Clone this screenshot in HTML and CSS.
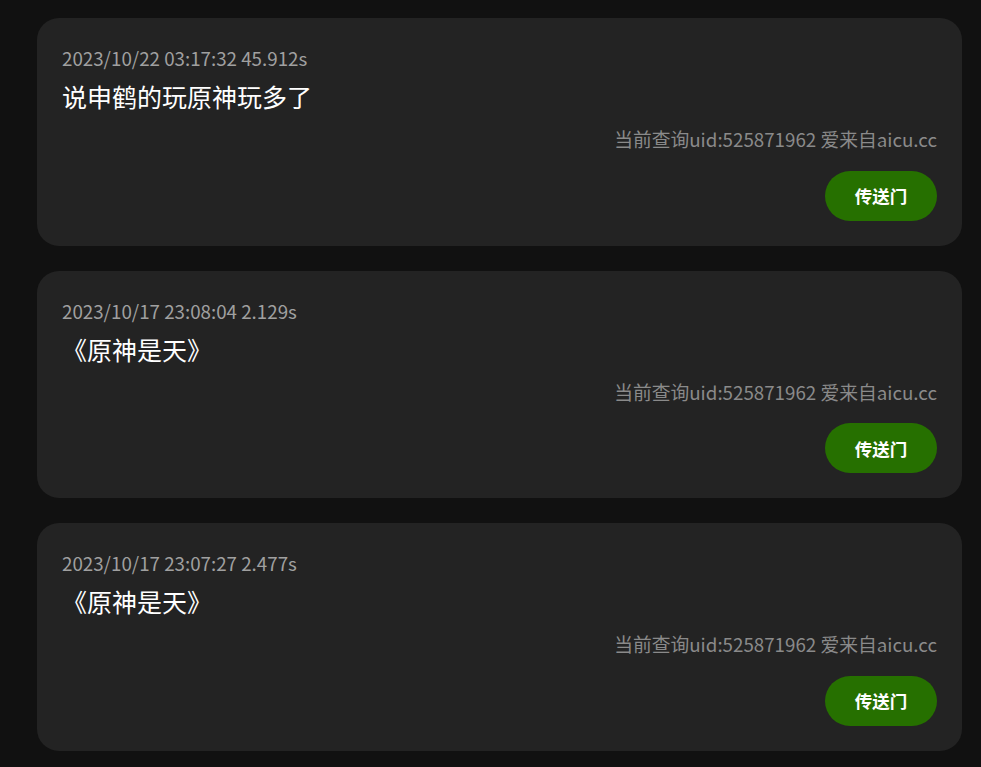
FILE: index.html
```html
<!DOCTYPE html>
<html lang="zh">
<head>
<meta charset="utf-8">
<link rel="stylesheet" href="styles.css">
</head>
<body>
<div class="list">
  <div class="card">
    <div class="time">2023/10/22 03:17:32 45.912s</div>
    <div class="title">说申鹤的玩原神玩多了</div>
    <div class="meta">当前查询uid:525871962 爱来自aicu.cc</div>
    <div class="actions"><button class="btn">传送门</button></div>
  </div>
  <div class="card">
    <div class="time">2023/10/17 23:08:04 2.129s</div>
    <div class="title">《原神是天》</div>
    <div class="meta">当前查询uid:525871962 爱来自aicu.cc</div>
    <div class="actions"><button class="btn">传送门</button></div>
  </div>
  <div class="card">
    <div class="time">2023/10/17 23:07:27 2.477s</div>
    <div class="title">《原神是天》</div>
    <div class="meta">当前查询uid:525871962 爱来自aicu.cc</div>
    <div class="actions"><button class="btn">传送门</button></div>
  </div>
</div>
</body>
</html>
```
FILE: styles.css
```css
html, body {
  margin: 0;
  background: #111111;
}
body {
  font-family: "Noto Sans CJK SC", "Noto Sans", sans-serif;
  overflow: hidden;
  height: 767px;
}
.list {
  display: flex;
  flex-direction: column;
  gap: 25px;
  padding: 18px 19px 0 37px;
}
.card {
  background: #232323;
  border-radius: 22px;
  padding: 26px 25px 25px 25px;
  display: flex;
  flex-direction: column;
}
.time {
  color: #a0a0a0;
  font-size: 18.75px;
  line-height: 28px;
}
.title {
  color: #ffffff;
  font-size: 25px;
  line-height: 38px;
  margin-top: 5px;
}
.meta {
  color: #8a8a8a;
  font-size: 18.75px;
  line-height: 28px;
  text-align: right;
  margin-top: 10px;
}
.actions {
  display: flex;
  justify-content: flex-end;
  margin-top: 17.5px;
}
.btn {
  background: #267000;
  color: #ffffff;
  border: none;
  border-radius: 25px;
  width: 112px;
  height: 50px;
  font-family: "Noto Sans CJK SC", sans-serif;
  font-size: 17.5px;
  font-weight: 700;
  padding: 0;
}
```
